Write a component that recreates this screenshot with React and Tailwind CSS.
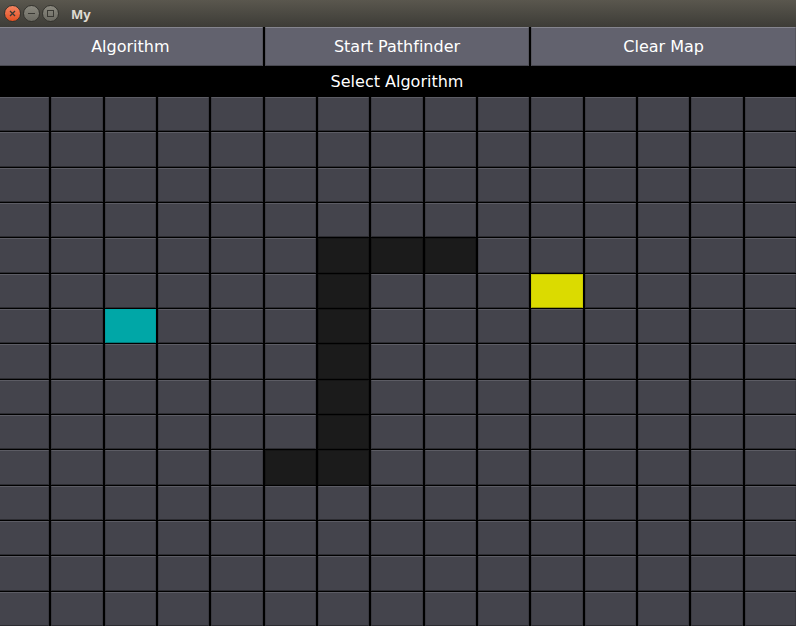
import React, { useState } from "react";

const COLUMNS = 15;
const ROWS = 15;
const START = "6-2";
const GOAL = "5-10";
const INITIAL_WALLS = ["4-6", "4-7", "4-8", "5-6", "6-6", "7-6", "8-6", "9-6", "10-5", "10-6"];

const TILE_STYLES = {
  empty: "bg-[#44444c] border-t-[#5c5c64] border-x-[#3a3a41] border-b-[#2c2c31]",
  wall: "bg-[#1b1b1b] border-[#151515]",
  start: "bg-[#00a7a7] border-t-[#00a7a7] border-x-[#009c9c] border-b-[#007c7c]",
  goal: "bg-[#dbdb00] border-t-[#c0c000] border-x-[#cccc00] border-b-[#a0a000]",
};

function WindowButton({ label, close, children }) {
  return (
    <button
      aria-label={label}
      className={
        "flex size-[17px] items-center justify-center rounded-full border border-[#35342f] " +
        (close
          ? "bg-linear-to-b from-[#f58460] to-[#e2501f]"
          : "bg-linear-to-b from-[#8b897f] to-[#6b6a62]")
      }
    >
      <svg viewBox="0 0 15 15" className="size-[15px] shrink-0" fill="none" stroke="#3a3934" strokeWidth="1">
        {children}
      </svg>
    </button>
  );
}

function TitleBar() {
  return (
    <header className="flex h-[27px] shrink-0 items-center bg-linear-to-b from-[#5a574e] to-[#3d3c37] pl-1">
      <div className="flex gap-0.5">
        <WindowButton label="Close" close>
          <path d="M5 5l5 5M10 5l-5 5" strokeWidth="1.3" />
        </WindowButton>
        <WindowButton label="Minimize">
          <path d="M4 7.5h7" />
        </WindowButton>
        <WindowButton label="Maximize">
          <rect x="4.5" y="4.5" width="6" height="6" />
        </WindowButton>
      </div>
      <h1 className="ml-3 font-['Noto_Sans',sans-serif] text-[13px] leading-4 font-bold text-[#dfdbd2]">My</h1>
    </header>
  );
}

function ToolbarButton({ children }) {
  return (
    <div className="flex-1 bg-black px-px">
      <button className="h-[39px] w-full border border-t-[#85858f] border-x-[#55555e] border-b-[#484850] bg-[#62626e] text-center">
        {children}
      </button>
    </div>
  );
}

export default function App() {
  const [walls, setWalls] = useState(INITIAL_WALLS);

  const toggle = (id) =>
    setWalls((list) => (list.includes(id) ? list.filter((w) => w !== id) : [...list, id]));

  const kind = (id) => {
    if (id === START) return "start";
    if (id === GOAL) return "goal";
    return walls.includes(id) ? "wall" : "empty";
  };

  return (
    <div className="flex h-screen flex-col overflow-hidden bg-black font-['DejaVu_Sans',sans-serif] text-base leading-5 text-white [font-variant-ligatures:none]">
      <TitleBar />
      <main className="-mr-px -ml-[3px] flex min-h-0 flex-1 flex-col">
        <div className="flex shrink-0">
          <ToolbarButton>Algorithm</ToolbarButton>
          <ToolbarButton>Start Pathfinder</ToolbarButton>
          <ToolbarButton>Clear Map</ToolbarButton>
        </div>
        <p className="h-[30px] shrink-0 pt-1.5 text-center">Select Algorithm</p>
        <div className="grid min-h-0 flex-1 grid-cols-15 grid-rows-15">
          {Array.from({ length: ROWS * COLUMNS }, (_, i) => {
            const id = `${Math.floor(i / COLUMNS)}-${i % COLUMNS}`;
            return (
              <div key={id} className="flex px-px pt-px">
                <button
                  aria-label={`Tile ${id}`}
                  onClick={() => toggle(id)}
                  className={"flex-1 border " + TILE_STYLES[kind(id)]}
                />
              </div>
            );
          })}
        </div>
      </main>
    </div>
  );
}
